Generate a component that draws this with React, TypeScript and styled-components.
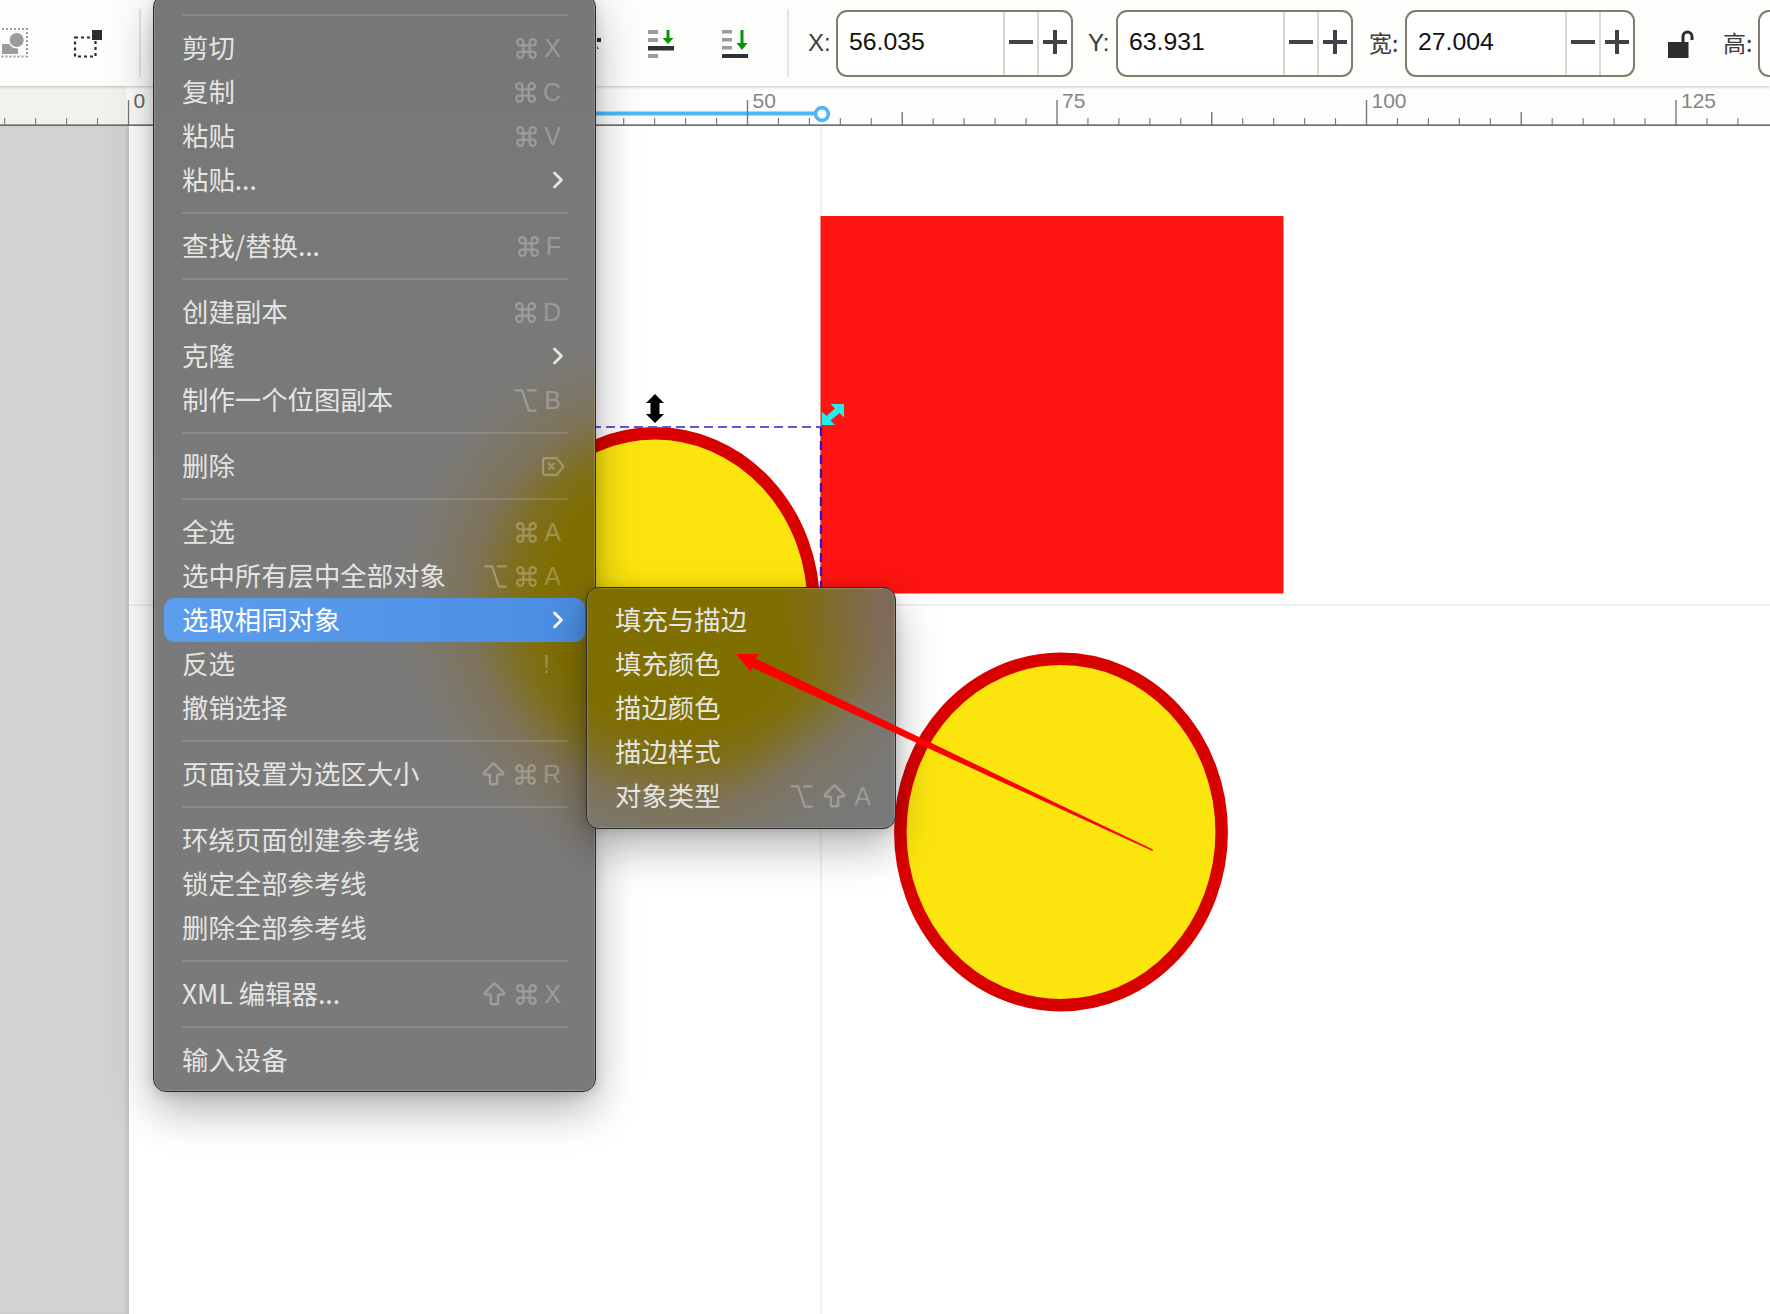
import React from "react";
import styled, { createGlobalStyle } from "styled-components";
import { ArrowBigUp, ChevronRight, Command, Option } from "lucide-react";

const Global = createGlobalStyle`
  html, body { margin: 0; padding: 0; background: #fff; }
  body { font-family: "Liberation Sans", "Noto Sans CJK SC", sans-serif; }
`;

const Page = styled.div`
  position: relative;
  width: 1770px;
  height: 1314px;
  overflow: hidden;
  display: flex;
  flex-direction: column;
`;

const Toolbar = styled.header`
  position: relative;
  z-index: 2;
  flex: none;
  display: flex;
  align-items: center;
  height: 86px;
  background: #fdfdfb;
  box-shadow: 0 1px 3px rgba(0, 0, 0, 0.22);
  overflow: hidden;
`;

const ToolIcon = styled.svg<{ $ml?: number }>`
  flex: none;
  height: 86px;
  margin-left: ${(p) => p.$ml ?? 0}px;
`;

const ToolSep = styled.div<{ $ml: number }>`
  flex: none;
  width: 2px;
  height: 68px;
  margin-left: ${(p) => p.$ml}px;
  background: #e4e4e0;
`;

const FieldLabel = styled.span<{ $ml: number; $w: number }>`
  flex: none;
  width: ${(p) => p.$w}px;
  margin-left: ${(p) => p.$ml}px;
  font: 24px "Liberation Sans", "Noto Sans CJK SC", sans-serif;
  color: #3c3c3c;
  white-space: nowrap;
`;

const CjkLabel = styled(FieldLabel)`
  font-size: 23px;
  font-family: "Noto Sans CJK SC", sans-serif;
  padding-bottom: 3px;
`;

const Spin = styled.div<{ $w: number }>`
  flex: none;
  box-sizing: border-box;
  display: flex;
  width: ${(p) => p.$w}px;
  height: 67px;
  margin-top: 1px;
  border: 2px solid #857a6e;
  border-radius: 11px;
  background: #fff;
`;

const SpinValue = styled.div`
  flex: 1;
  display: flex;
  align-items: center;
  padding-left: 11px;
  padding-bottom: 4px;
  font: 24.8px "Liberation Sans", sans-serif;
  color: #111;
`;

const SpinButton = styled.div`
  flex: none;
  box-sizing: border-box;
  width: 34px;
  display: flex;
  align-items: center;
  justify-content: center;
  border-left: 2px solid #dbd8d3;
  padding-bottom: 4px;
  svg { display: block; }
`;

const RulerBar = styled.div`
  position: relative;
  z-index: 1;
  flex: none;
  height: 40px;
  background: linear-gradient(to right, #f2f2ec 0 126px, #fdfdfb 126px);
  svg { display: block; }
`;

const Workspace = styled.main`
  flex: 1;
  display: flex;
  min-height: 0;
`;

const Gutter = styled.div`
  flex: none;
  width: 129px;
  background: #d2d2d2;
  box-shadow: inset -3px 0 3px rgba(0, 0, 0, 0.07);
`;

const Canvas = styled.div`
  flex: 1;
  background: #fff;
  svg { display: block; }
`;

const Overlay = styled.svg`
  position: absolute;
  left: 0;
  top: 0;
  z-index: 6;
  pointer-events: none;
`;

const glow = (x: number, y: number) => `radial-gradient(290px 280px at ${x}px ${y}px,
  #7f6e00 0 45%, #7f6f1c 58%, #7e7358 72%, #7c7870 88%, rgba(122, 122, 122, 0) 100%)`;

const Menu = styled.nav`
  position: absolute;
  z-index: 4;
  left: 153px;
  top: -6px;
  box-sizing: border-box;
  width: 443px;
  padding: 9px 10px;
  border: 1px solid #2a2a2a;
  border-radius: 13px;
  box-shadow: inset 0 0 0 1px rgba(255, 255, 255, 0.16), 0 18px 44px rgba(0, 0, 0, 0.3), 0 2px 12px rgba(0, 0, 0, 0.14);
  background: ${glow(527, 606)}, linear-gradient(#767877, #7a7a7a 60%);
`;

const SubMenu = styled(Menu)`
  z-index: 5;
  left: 586px;
  top: 587px;
  width: 310px;
  padding: 10px 10px;
  background: radial-gradient(120px 110px at 100% 8%, rgba(128, 104, 92, 0.85), rgba(128, 104, 92, 0)),
    radial-gradient(170px 150px at 100% 100%, rgba(120, 120, 120, 0.9), rgba(120, 120, 120, 0)),
    ${glow(94, 13)}, #787878;
`;

const Row = styled.div<{ $active?: boolean }>`
  display: flex;
  align-items: center;
  height: 44px;
  padding: 0 24px 3px 18px;
  box-sizing: border-box;
  border-radius: 10px;
  font: 400 26.4px "Noto Sans CJK SC", sans-serif;
  white-space: nowrap;
  color: ${(p) => (p.$active ? "#fff" : "#e4e4e2")};
  background: ${(p) => (p.$active ? "linear-gradient(to right, #5c9dee, #4a8de2)" : "none")};
`;

const SubRow = styled(Row)`
  padding-right: 14px;
  padding-left: 18px;
`;

const RowLabel = styled.span`
  flex: 1;
`;

const Keys = styled.span<{ $mr?: number }>`
  display: flex;
  align-items: center;
  gap: 5px;
  margin-top: 3px;
  margin-right: ${(p) => p.$mr ?? 0}px;
  font: 25px "Liberation Sans", sans-serif;
  color: rgba(255, 255, 255, 0.27);
  svg { display: block; }
`;

const MenuChevron = styled(ChevronRight)`
  margin: 3px -11px 0 0;
  color: inherit;
`;

const Separator = styled.div`
  height: 22px;
  margin: 0 17px 0 18px;
  display: flex;
  align-items: center;
  &::before {
    content: "";
    flex: 1;
    height: 2px;
    background: rgba(255, 255, 255, 0.13);
  }
`;

const ToolRuler = () => {
  const ticks: React.ReactNode[] = [];
  const x = (u: number) => 128.5 + u * 12.38;
  for (let i = -4; i <= 52; i++) {
    const u = i * 2.5;
    const big = i % 10 === 0;
    const mid = i % 5 === 0;
    const top = big ? 100 : mid ? 112 : 118;
    ticks.push(<line key={i} x1={x(u)} x2={x(u)} y1={top} y2={125} stroke="#777" strokeWidth={big || mid ? 1.4 : 1.1} />);
    if (big && u >= 0) {
      ticks.push(
        <text key={`t${i}`} x={x(u) + 5} y={108} fontFamily="Liberation Sans" fontSize={21} fill={u === 0 ? "#666" : "#858585"}>
          {u}
        </text>
      );
    }
  }
  return (
    <svg width="1770" height="40" viewBox="0 86 1770 40">
      <line x1="400" x2="816" y1="113.5" y2="113.5" stroke="#4cb8f8" strokeWidth="4" />
      {ticks}
      <rect x="0" y="124.3" width="1770" height="1.7" fill="#707070" />
      <circle cx="822" cy="114" r="6.4" fill="#fff" stroke="#4cb8f8" strokeWidth="3.6" />
    </svg>
  );
};

const Minus = () => (
  <svg width="24" height="24" viewBox="0 0 24 24"><rect x="0" y="10" width="24" height="4" fill="#3f4347" /></svg>
);
const Plus = () => (
  <svg width="24" height="24" viewBox="0 0 24 24"><path d="M0 10h10V0h4v10h10v4H14v10h-4V14H0z" fill="#3f4347" /></svg>
);

const SpinField = ({ w, value }: { w: number; value?: string }) => (
  <Spin $w={w}>
    <SpinValue>{value}</SpinValue>
    <SpinButton><Minus /></SpinButton>
    <SpinButton><Plus /></SpinButton>
  </Spin>
);

const Del = () => (
  <svg width="23" height="21" viewBox="0 0 22 20" fill="none" stroke="currentColor" strokeWidth="2">
    <path d="M3 2h11l6.500 8-6.500 8H3a2 2 0 0 1-2-2V4a2 2 0 0 1 2-2z" />
    <path d="M6 6.500l6 6.500M12 6.500l-6 6.500" />
  </svg>
);
const Cmd = () => <Command size={25} strokeWidth={2.1} />;
const Opt = () => <Option size={27} strokeWidth={2} />;
const Shift = () => <ArrowBigUp size={29} strokeWidth={2} />;

type Item = { label?: string; keys?: React.ReactNode; keysMr?: number; sub?: boolean; active?: boolean };

const items: Item[] = [
  {},
  { label: "剪切", keys: <><Cmd />X</> },
  { label: "复制", keys: <><Cmd />C</> },
  { label: "粘贴", keys: <><Cmd />V</> },
  { label: "粘贴...", sub: true },
  {},
  { label: "查找/替换...", keys: <><Cmd />F</> },
  {},
  { label: "创建副本", keys: <><Cmd />D</> },
  { label: "克隆", sub: true },
  { label: "制作一个位图副本", keys: <><Opt />B</> },
  {},
  { label: "删除", keys: <Del />, keysMr: -4 },
  {},
  { label: "全选", keys: <><Cmd />A</> },
  { label: "选中所有层中全部对象", keys: <><Opt /><Cmd />A</> },
  { label: "选取相同对象", sub: true, active: true },
  { label: "反选", keys: "!", keysMr: 11 },
  { label: "撤销选择" },
  {},
  { label: "页面设置为选区大小", keys: <><Shift /><Cmd />R</> },
  {},
  { label: "环绕页面创建参考线" },
  { label: "锁定全部参考线" },
  { label: "删除全部参考线" },
  {},
  { label: "XML 编辑器...", keys: <><Shift /><Cmd />X</> },
  {},
  { label: "输入设备" },
];

export default function App() {
  return (
    <Page>
      <Global />
      <Toolbar>
        <ToolIcon width="30" viewBox="0 0 30 86">
          <rect x="-6" y="29" width="33" height="27.500" fill="none" stroke="#9c9c9c" strokeWidth="2" strokeDasharray="2 2" />
          <rect x="2" y="44" width="16" height="10" fill="#9c9c9c" />
          <circle cx="16.700" cy="40" r="7.800" fill="#9c9c9c" stroke="#fdfdfb" strokeWidth="1.500" />
        </ToolIcon>
        <ToolIcon $ml={40} width="34" viewBox="70 0 34 86">
          <rect x="75" y="37.500" width="20.500" height="19" fill="none" stroke="#2a2e30" strokeWidth="2.200" strokeDasharray="3 3" />
          <rect x="92" y="30" width="10" height="10" fill="#2a2e30" />
        </ToolIcon>
        <ToolSep $ml={35} />
        <ToolIcon $ml={456} width="7" viewBox="597 0 7 86">
          <rect x="597" y="38" width="4" height="4" fill="#2a2e30" />
          <path d="M597 46l2 3h-2z" fill="#090" />
        </ToolIcon>
        <ToolIcon $ml={44} width="26" viewBox="648 0 26 86">
          <path d="M648 30h10v4h-10zM648 38h10v4h-10zM648 54h10v4h-10z" fill="#9c9c9c" />
          <rect x="648" y="46" width="26" height="4.500" fill="#2e3234" />
          <path d="M666.500 30h3v8h4l-5.500 6-5.500-6h4z" fill="#090" />
        </ToolIcon>
        <ToolIcon $ml={48} width="26" viewBox="722 0 26 86">
          <path d="M722 30h10v3.500h-10zM722 38h10v3.500h-10zM722 46h10v3.500h-10z" fill="#9c9c9c" />
          <rect x="722" y="54" width="26" height="4" fill="#2e3234" />
          <path d="M740.500 30h3v13h4l-5.500 7-5.500-7h4z" fill="#090" />
        </ToolIcon>
        <ToolSep $ml={39} />
        <FieldLabel $ml={19} $w={28}>X:</FieldLabel>
        <SpinField w={237} value="56.035" />
        <FieldLabel $ml={15} $w={28}>Y:</FieldLabel>
        <SpinField w={237} value="63.931" />
        <CjkLabel $ml={16} $w={36}>宽:</CjkLabel>
        <SpinField w={230} value="27.004" />
        <ToolIcon $ml={33} width="26" viewBox="1668 0 26 86">
          <rect x="1668" y="42" width="20.500" height="16" fill="#2a2e30" />
          <path d="M1683 42v-5.500a4.400 4.400 0 0 1 9 0v3.500" fill="none" stroke="#2a2e30" strokeWidth="3" />
        </ToolIcon>
        <CjkLabel $ml={29} $w={35}>高:</CjkLabel>
        <SpinField w={236} />
      </Toolbar>
      <RulerBar>
        <ToolRuler />
      </RulerBar>
      <Workspace>
        <Gutter />
        <Canvas>
          <svg width="1641" height="1188" viewBox="129 126 1641 1188">
            <line x1="821" x2="821" y1="126" y2="1314" stroke="#ececec" strokeWidth="1.500" />
            <line x1="129" x2="1770" y1="605" y2="605" stroke="#ececec" strokeWidth="1.500" />
            <ellipse cx="1061" cy="832" rx="160.700" ry="173.200" fill="#fce50e" stroke="#d90000" strokeWidth="12.500" />
            <ellipse cx="655" cy="606" rx="158.700" ry="172.700" fill="#fce50e" stroke="#d90000" strokeWidth="12.500" />
            <rect x="820.500" y="216" width="463" height="377.500" fill="#fe1410" />
            <line x1="480" x2="821" y1="427" y2="427" stroke="#5a5ad8" strokeWidth="2" strokeDasharray="9 5" />
            <line x1="821" x2="821" y1="427" y2="790" stroke="#3a14c0" strokeWidth="2.400" strokeDasharray="9 5" />
            <path d="M655 394l9 9h-4.500v11h4.500l-9 9-9-9h4.500v-11h-4.500z" fill="#000" />
            <path d="M844 404h-13.500l4.500 4.500-8.500 7.500-4.800-4.500v13.500h13.300l-4.500-4.500 9-7.500 4.500 4.500z" fill="#22eeee" />
          </svg>
        </Canvas>
      </Workspace>
      <Menu>
        {items.map((it, i) =>
          it.label ? (
            <Row key={i} $active={it.active}>
              <RowLabel>{it.label}</RowLabel>
              {it.sub ? <MenuChevron size={28} strokeWidth={2.400} /> : null}
              {it.keys ? <Keys $mr={it.keysMr}>{it.keys}</Keys> : null}
            </Row>
          ) : (
            <Separator key={i} />
          )
        )}
      </Menu>
      <SubMenu>
        <SubRow><RowLabel>填充与描边</RowLabel></SubRow>
        <SubRow><RowLabel>填充颜色</RowLabel></SubRow>
        <SubRow><RowLabel>描边颜色</RowLabel></SubRow>
        <SubRow><RowLabel>描边样式</RowLabel></SubRow>
        <SubRow>
          <RowLabel>对象类型</RowLabel>
          <Keys><Opt /><Shift />A</Keys>
        </SubRow>
      </SubMenu>
      <Overlay width="1770" height="1314" viewBox="0 0 1770 1314">
        <path d="M736 654L759 654 755.500 658.500 1153 849.500 1152.500 851 752 667.500 750.700 671.700z" fill="#f00" />
      </Overlay>
    </Page>
  );
}
